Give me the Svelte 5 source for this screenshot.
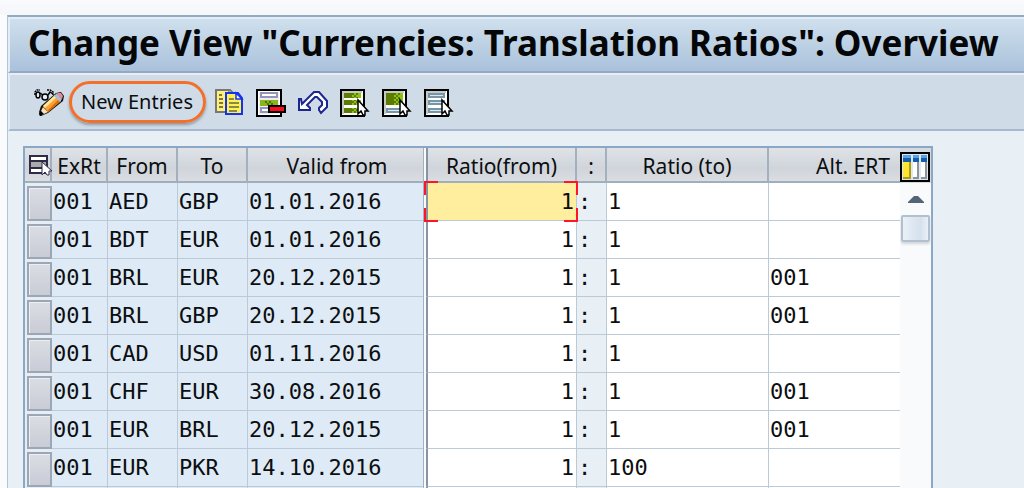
<script lang="ts">
  interface Ratio {
    rateType: string;
    from: string;
    to: string;
    validFrom: string;
    ratioFrom: string;
    ratioTo: string;
    altRate: string;
  }

  let rows: Ratio[] = $state([
    { rateType: "001", from: "AED", to: "GBP", validFrom: "01.01.2016", ratioFrom: "1", ratioTo: "1", altRate: "" },
    { rateType: "001", from: "BDT", to: "EUR", validFrom: "01.01.2016", ratioFrom: "1", ratioTo: "1", altRate: "" },
    { rateType: "001", from: "BRL", to: "EUR", validFrom: "20.12.2015", ratioFrom: "1", ratioTo: "1", altRate: "001" },
    { rateType: "001", from: "BRL", to: "GBP", validFrom: "20.12.2015", ratioFrom: "1", ratioTo: "1", altRate: "001" },
    { rateType: "001", from: "CAD", to: "USD", validFrom: "01.11.2016", ratioFrom: "1", ratioTo: "1", altRate: "" },
    { rateType: "001", from: "CHF", to: "EUR", validFrom: "30.08.2016", ratioFrom: "1", ratioTo: "1", altRate: "001" },
    { rateType: "001", from: "EUR", to: "BRL", validFrom: "20.12.2015", ratioFrom: "1", ratioTo: "1", altRate: "001" },
    { rateType: "001", from: "EUR", to: "PKR", validFrom: "14.10.2016", ratioFrom: "1", ratioTo: "100", altRate: "" },
    { rateType: "", from: "", to: "", validFrom: "", ratioFrom: "", ratioTo: "", altRate: "" },
  ]);

  let active = $state(0);
</script>

{#snippet pointer()}
  <path d="M18 13v14l3-3 2 4h2v-4h3z" fill="#fff" stroke="#000" stroke-width="1.5" />
{/snippet}

{#snippet sheet()}
  <path d="M1 3h23v26H1z" fill="#fff" stroke="#000" stroke-width="2" />
  <path d="M3 27V5h19" fill="none" stroke="#c4c8c4" stroke-width="2" />
{/snippet}

{#snippet greenBar(y: number, h: number)}
  <rect x="4" {y} width="17" height={h} fill="#5c7c00" />
  <rect x="12" {y} width="9" height={h} fill="url(#checker)" />
  <rect x="18" {y} width="3" height={h} fill="#8ac411" />
{/snippet}

<div class="page">
  <main class="window">
    <h1>Change View "Currencies: Translation Ratios": Overview</h1>

    <div class="toolbar">
      <button class="icon" aria-label="Display / Change">
        <svg viewBox="0 0 30 30">
          <path d="M7 19L22 6l5-1 3 4-1 5-15 12-7 3H6l-1-4z" fill="#111" />
          <path d="M9 19L21 8l6 6-13 11z" fill="#ffa12c" />
          <path d="M9 19L21 8l2 2-12 11z" fill="#ffe6a0" />
          <path d="M13 24L25 12l2 2-13 11z" fill="#d86e10" />
          <path d="M20 9l3-3 5 6-2 3z" fill="#a9bcd6" />
          <path d="M24 6h3l2 3-1 3-5-5z" fill="#e98a98" />
          <path d="M9 20l5 5-6 3-1-4z" fill="#f7dfb5" />
          <path d="M7 24l3 3-4 2-1-2z" fill="#000" />
          <g fill="none" stroke="#000" stroke-width="1.5">
            <path d="M1 8V5l2-2h3M13 3h3l3 2v3" stroke-dasharray="2 .7" />
            <ellipse cx="4" cy="8" rx="2" ry="3" fill="#e4edf4" />
            <ellipse cx="11" cy="10" rx="3" ry="3" fill="#e4edf4" />
            <path d="M6 6l3 2M14 8l2-3 3 2" />
          </g>
        </svg>
      </button>

      <button class="new-entries">New Entries</button>

      <button class="icon" aria-label="Copy As">
        <svg viewBox="0 0 30 30">
          <path d="M2 3h14l4 4v18H2z" fill="#ffef75" stroke="#777" stroke-width="2" />
          <path d="M15 3v5h4" fill="#fff" stroke="#777" stroke-width="1.5" />
          <path d="M5 8h3M5 12h4M5 16h4M5 20h4" stroke="#7b7840" stroke-width="2" />
          <path d="M12 6h12l4 5v16H12z" fill="#fff052" stroke="#1432f5" stroke-width="2" />
          <path d="M22 6v6h6z" fill="#fff" stroke="#1432f5" stroke-width="1.5" />
          <path d="M15 12h5M15 16h10M15 20h10M15 24h8" stroke="#8b8848" stroke-width="2" />
        </svg>
      </button>

      <button class="icon" aria-label="Delete">
        <svg viewBox="0 0 30 30">
          <defs>
            <pattern id="checker" width="4" height="4" patternUnits="userSpaceOnUse">
              <rect width="4" height="4" fill="#5c7c00" />
              <path d="M0 0h2v2H0zM2 2h2v2H2z" fill="#8ac411" />
            </pattern>
          </defs>
          <path d="M1 3h24v26H1z" fill="#fff" stroke="#000" stroke-width="2" />
          <path d="M3 5h20v22H3z" fill="#ededed" />
          <path d="M5 6h16v4H5zM5 21h16v4H5z" fill="#fff" stroke="#9295bd" stroke-width="2" />
          <rect x="4" y="13" width="18" height="6" fill="#8ab51f" />
          <path d="M9 14h2v2H9zM11 16h2v2h-2zM13 14h2v2h-2zM15 16h2v2h-2z" fill="#4d7200" />
          <path d="M13 19h16v6H13z" fill="#ff0a1e" stroke="#000" stroke-width="2" />
        </svg>
      </button>

      <button class="icon" aria-label="Undo Change">
        <svg viewBox="0 0 30 30">
          <path
            d="M1 12v11h11v-2l-3-3 8-8h2l5 5v3l-3 3v2l2 3 6-6v-6l-8-9h-5L4 17l-1-5z"
            fill="#fff"
            stroke="#1c2690"
            stroke-width="2"
          />
        </svg>
      </button>

      <button class="icon" aria-label="Select All">
        <svg viewBox="0 0 30 30">
          {@render sheet()}
          {@render greenBar(6, 5)}
          {@render greenBar(13, 5)}
          {@render greenBar(21, 5)}
          {@render pointer()}
        </svg>
      </button>

      <button class="icon" aria-label="Select Block">
        <svg viewBox="0 0 30 30">
          {@render sheet()}
          {@render greenBar(6, 12)}
          <path d="M5 22h15v3H5z" fill="#dcecf5" stroke="#7895a8" stroke-width="2" />
          {@render pointer()}
        </svg>
      </button>

      <button class="icon" aria-label="Deselect All">
        <svg viewBox="0 0 30 30">
          {@render sheet()}
          <path
            d="M5 7h15v3H5zM5 14h15v3H5zM5 22h15v3H5z"
            fill="#d4e9f5"
            stroke="#7895a8"
            stroke-width="2"
          />
          {@render pointer()}
        </svg>
      </button>
    </div>

    <section class="control">
      <table>
        <colgroup>
          <col class="c-select" />
          <col class="c-rate" />
          <col class="c-currency" />
          <col class="c-currency" />
          <col class="c-date" />
          <col class="c-from" />
          <col class="c-colon" />
          <col class="c-to" />
          <col class="c-alt" />
        </colgroup>
        <thead>
          <tr>
            <th class="corner">
              <button aria-label="Select all rows">
                <svg viewBox="0 0 24 24">
                  <path d="M2 2h17v17H2z" fill="#fff" stroke="#2d2b48" stroke-width="2" />
                  <path d="M3 8h15v5H3z" fill="#aaa" />
                  <path d="M2 7h17M2 14h17" stroke="#2d2b48" stroke-width="2" />
                  <path d="M14 8v13l3-3 2 3h2v-4h3z" fill="#fff" stroke="#2d2b48" />
                </svg>
              </button>
            </th>
            <th>ExRt</th>
            <th>From</th>
            <th>To</th>
            <th class="frozen">Valid from</th>
            <th>Ratio(from)</th>
            <th>:</th>
            <th>Ratio (to)</th>
            <th class="alt">Alt. ERT</th>
          </tr>
        </thead>
        <tbody>
          {#each rows as row, i}
            <tr>
              <td class="select"><button aria-label="Select row {i + 1}"></button></td>
              <td>{row.rateType}</td>
              <td>{row.from}</td>
              <td>{row.to}</td>
              <td class="frozen">{row.validFrom}</td>
              <td class="edit ratio-from" class:active={active === i}>
                <input
                  aria-label="Ratio (from), row {i + 1}"
                  bind:value={row.ratioFrom}
                  onfocus={() => (active = i)}
                />
                {#if active === i}
                  <span class="brackets" aria-hidden="true"></span>
                {/if}
              </td>
              <td class="colon">{row.ratioFrom ? ":" : ""}</td>
              <td class="edit"><input aria-label="Ratio (to), row {i + 1}" bind:value={row.ratioTo} /></td>
              <td class="edit alt"><input aria-label="Alt. ERT, row {i + 1}" bind:value={row.altRate} /></td>
            </tr>
          {/each}
        </tbody>
      </table>

      <div class="side">
        <button class="configure" aria-label="Configuration">
          <svg viewBox="0 0 30 30">
            <path d="M1 1h28v28H1z" fill="#d8e6f2" stroke="#000" stroke-width="2" />
            <path d="M3 3h24v3H3z" fill="#5ba2e0" />
            <path d="M3 6h24v4H3z" fill="#175caa" />
            <path d="M3 10h8v17H3z" fill="#ffe52b" />
            <path d="M11 10v17H3v-2h6V10z" fill="#b29a10" />
            <path d="M13 10h6v17h-6zM21 10h6v17h-6z" fill="#fff" />
            <path d="M19 10v17h-6v-2h4V10zM27 10v17h-6v-2h4V10z" fill="#8f9296" />
            <path d="M12 3v24M20 3v24" stroke="#d9e9f5" stroke-width="2" />
          </svg>
        </button>
        <button class="scroll-up" aria-label="Scroll up">
          <svg viewBox="0 0 16 8"><path d="M0 8V7l6-6h4l6 6v1z" fill="#546575" /></svg>
        </button>
        <div class="track"><div class="thumb"></div></div>
      </div>
    </section>
  </main>
</div>

<style>
  :global(body) {
    margin: 0;
    overflow: hidden;
  }

  .page {
    box-sizing: border-box;
    height: 100vh;
    padding: 15px 0 0 7px;
    overflow: hidden;
    background: linear-gradient(#fafbfd, #f4f6fa 14px, #fafbfc 15px);
    color: #0c0e10;
    font-family: "Noto Sans", "Open Sans", sans-serif;
  }

  .window {
    min-height: 100%;
    border-top: 2px solid #94aac4;
    border-left: 1px solid #b4c3d6;
    background: #e8f0f5;
  }

  h1 {
    margin: 0;
    padding: 0 8px 4px 18px;
    border-top: 2px solid #e2edf5;
    border-left: 2px solid #e2edf5;
    border-bottom: 2px solid #94aac4;
    background: linear-gradient(#cfdfed, #b9cee2 60%, #aac1dc);
    color: #050608;
    font-size: 35px;
    line-height: 48px;
    white-space: nowrap;
  }

  button {
    padding: 0;
    border: 0;
    background: none;
    color: inherit;
    font: inherit;
  }

  svg {
    display: block;
  }

  .toolbar {
    display: flex;
    align-items: center;
    gap: 12px;
    height: 54px;
    padding-left: 24px;
    border-top: 2px solid #e6eef4;
    border-left: 2px solid #e2edf5;
    border-bottom: 2px solid #a7b9cd;
    background: #cfdce7;
  }

  .icon {
    width: 30px;
    height: 30px;
  }

  .new-entries {
    height: 42px;
    margin: 0 -4px 0 -7px;
    padding: 0 10px 0 9px;
    border: 3px solid #f4702a;
    border-radius: 21px;
    box-shadow: 0 2px 3px #8d9aa5;
    font-size: 20px;
    line-height: 32px;
  }

  .control {
    display: flex;
    width: max-content;
    margin: 15px 0 0 15px;
    border: 2px solid #8ba7c6;
    border-bottom: 0;
    background: #fff;
  }

  table {
    width: 875px;
    border-spacing: 0;
    table-layout: fixed;
  }

  .c-select {
    width: 27px;
  }

  .c-rate {
    width: 56px;
  }

  .c-currency {
    width: 70px;
  }

  .c-date {
    width: 180px;
  }

  .c-from {
    width: 149px;
  }

  .c-colon {
    width: 30px;
  }

  .c-to {
    width: 162px;
  }

  .c-alt {
    width: 131px;
  }

  th {
    box-sizing: border-box;
    height: 35px;
    padding: 2px 0 0;
    border-right: 2px solid #a4b0bd;
    border-bottom: 2px solid #a1aebb;
    background: linear-gradient(#dfe3e8, #d0d5db 60%, #dadde1);
    font-size: 21px;
    font-weight: 400;
    line-height: 30px;
    white-space: nowrap;
  }

  th.corner button {
    display: block;
    width: 24px;
    height: 24px;
    margin-left: 3px;
  }

  th.alt {
    padding-right: 10px;
    border-right: 0;
    text-align: right;
  }

  td {
    box-sizing: border-box;
    height: 38px;
    padding: 0 0 0 1px;
    border-right: 1px solid #bccad8;
    border-bottom: 1px solid #bccad8;
    background: #deeaf5;
    font-family: "DejaVu Sans Mono", monospace;
    font-size: 22px;
    line-height: 36px;
    white-space: nowrap;
  }

  .frozen {
    position: relative;
    border-right: 2px solid #8795a3;
  }

  /* gap in front of the scrolling columns */
  .frozen::after {
    content: "";
    position: absolute;
    top: 0;
    right: 0;
    bottom: -2px;
    width: 2px;
    border-left: 1px solid #a4b0bd;
    background: #f8fafc;
  }

  td.select {
    padding: 2px 0 0 2px;
    border: 0;
    background: #e6edf3;
  }

  td.select button {
    display: block;
    box-sizing: border-box;
    width: 25px;
    height: 35px;
    border: 2px solid #9ba6b6;
    background: linear-gradient(#dadde3, #c9ccd5);
    box-shadow: inset 1px 1px #eceef2;
  }

  td.edit {
    position: relative;
    background: #fff;
  }

  td.colon {
    background: #e8f0f5;
  }

  td.alt {
    border-right: 0;
  }

  input {
    display: block;
    box-sizing: border-box;
    width: 100%;
    height: 36px;
    padding: 0;
    border: 0;
    outline: 0;
    background: none;
    color: inherit;
    font: inherit;
  }

  .ratio-from input {
    padding-right: 2px;
    text-align: right;
  }

  td.active {
    background: #ffee9e;
  }

  .brackets {
    position: absolute;
    inset: -2px -2px -2px -4px;
    z-index: 1;
    background:
      linear-gradient(#ff1428, #ff1428) 0 0 / 14px 2px,
      linear-gradient(#ff1428, #ff1428) 0 0 / 2px 14px,
      linear-gradient(#ff1428, #ff1428) 100% 0 / 14px 2px,
      linear-gradient(#ff1428, #ff1428) 100% 0 / 2px 14px,
      linear-gradient(#ff1428, #ff1428) 0 100% / 14px 2px,
      linear-gradient(#ff1428, #ff1428) 0 100% / 2px 14px,
      linear-gradient(#ff1428, #ff1428) 100% 100% / 14px 2px,
      linear-gradient(#ff1428, #ff1428) 100% 100% / 2px 14px;
    background-repeat: no-repeat;
    pointer-events: none;
  }

  .side {
    display: flex;
    flex-direction: column;
    width: 31px;
    background: #f8fafc;
  }

  .configure {
    height: 35px;
    padding-top: 3px;
    background: #d5dae0;
  }

  .configure svg {
    width: 30px;
    height: 30px;
  }

  .scroll-up {
    height: 32px;
  }

  .scroll-up svg {
    width: 16px;
    height: 8px;
    margin: 0 auto;
  }

  .thumb {
    height: 23px;
    margin: 0 1px;
    border: 2px solid #b1c0cc;
    border-radius: 2px;
    background: linear-gradient(90deg, #e9f0f7, #d5e1ed 70%, #e9f0f7);
    box-shadow: 0 2px 3px #d0d4d8;
  }
</style>
